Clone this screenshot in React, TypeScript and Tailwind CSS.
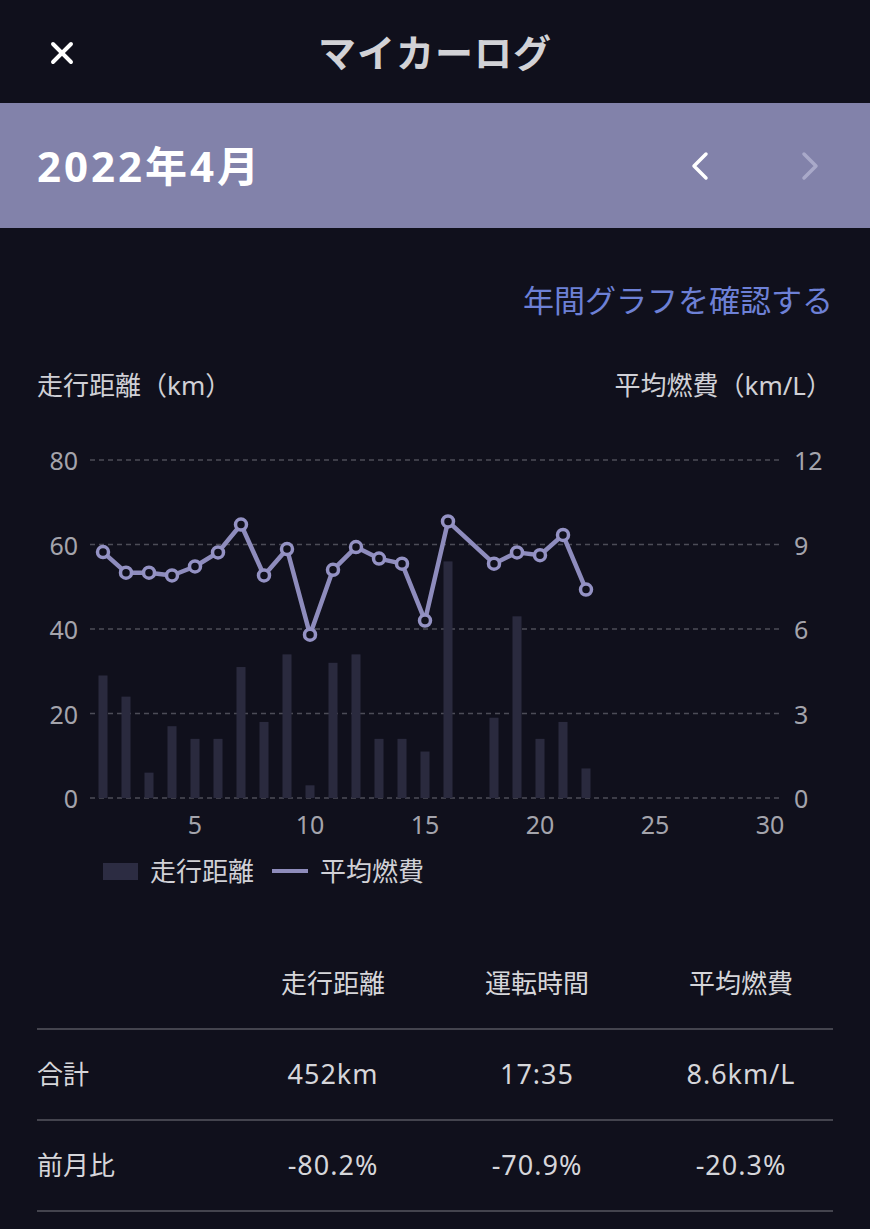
import { X } from "lucide-react";

const FONT = '"Noto Sans", "Noto Sans CJK JP", sans-serif';

// daily distance (km) and average fuel economy (km/L); null = no data that day
const distance = [29, 24, 6, 17, 14, 14, 31, 18, 34, 3, 32, 34, 14, 14, 11, 56, 0, 19, 43, 14, 18, 7];
const fuel: (number | null)[] = [
  8.73, 8.0, 8.0, 7.9, 8.22, 8.72, 9.71, 7.9, 8.84, 5.8, 8.1, 8.91, 8.5, 8.32, 6.3, 9.82, null, 8.32, 8.72, 8.62,
  9.34, 7.4,
];

const PLOT_TOP = 57;
const PLOT_BOTTOM = 395;
const PLOT_LEFT = 90;
const PLOT_RIGHT = 783;
const H = PLOT_BOTTOM - PLOT_TOP;

const xOf = (day: number) => 103 + (day - 1) * 23;
const yKm = (km: number) => PLOT_BOTTOM - (km / 80) * H;
const yFuel = (v: number) => PLOT_BOTTOM - (v / 12) * H;

function Chart() {
  const ticks = [0, 1, 2, 3, 4];
  const points = fuel
    .map((v, i) => (v == null ? null : { x: xOf(i + 1), y: yFuel(v) }))
    .filter((p): p is { x: number; y: number } => p !== null);

  return (
    <svg width={870} height={450} viewBox="0 0 870 450" className="block" fontFamily={FONT}>
      {ticks.map((t) => {
        const y = PLOT_BOTTOM - (t / 4) * H;
        return (
          <g key={t}>
            <line
              x1={PLOT_LEFT}
              x2={PLOT_RIGHT}
              y1={y}
              y2={y}
              stroke="#4c4c57"
              strokeWidth={1.5}
              strokeDasharray="5 4"
            />
            <text x={78} y={y} textAnchor="end" dominantBaseline="central" fontSize={25} fill="#a4a4ac">
              {t * 20}
            </text>
            <text x={794} y={y} textAnchor="start" dominantBaseline="central" fontSize={25} fill="#a4a4ac">
              {t * 3}
            </text>
          </g>
        );
      })}

      {distance.map((km, i) =>
        km > 0 ? (
          <rect key={i} x={xOf(i + 1) - 4.5} y={yKm(km)} width={9} height={PLOT_BOTTOM - yKm(km)} fill="#2a2a3e" />
        ) : null
      )}

      <polyline
        points={points.map((p) => `${p.x},${p.y}`).join(" ")}
        fill="none"
        stroke="#8e8cbd"
        strokeWidth={4.5}
        strokeLinejoin="round"
      />
      {points.map((p, i) => (
        <circle key={i} cx={p.x} cy={p.y} r={5.5} fill="#10101c" stroke="#9492c4" strokeWidth={3.5} />
      ))}

      {[5, 10, 15, 20, 25, 30].map((d) => (
        <text key={d} x={xOf(d)} y={421} textAnchor="middle" dominantBaseline="central" fontSize={25} fill="#a4a4ac">
          {d}
        </text>
      ))}
    </svg>
  );
}

const rows = [
  { label: "合計", values: ["452km", "17:35", "8.6km/L"] },
  { label: "前月比", values: ["-80.2%", "-70.9%", "-20.3%"] },
];

function StatsTable() {
  const grid = "grid grid-cols-[194px_204px_204px_194px] items-center";
  return (
    <div className="mx-[37px] text-[26px] text-[#d6d6da]">
      <div className={`${grid} h-[92px] border-b-2 border-[#44444e]`}>
        <div />
        <div className="text-center">走行距離</div>
        <div className="text-center">運転時間</div>
        <div className="text-center pl-[10px]">平均燃費</div>
      </div>
      {rows.map((r) => (
        <div key={r.label} className={`${grid} h-[91px] border-b-2 border-[#44444e]`}>
          <div>{r.label}</div>
          <div className="text-center text-[27px] tracking-[1px]">{r.values[0]}</div>
          <div className="text-center text-[27px] tracking-[1px]">{r.values[1]}</div>
          <div className="text-center pl-[10px] text-[27px] tracking-[1px]">{r.values[2]}</div>
        </div>
      ))}
    </div>
  );
}

export default function App() {
  return (
    <div className="w-[870px] h-[1229px] overflow-hidden bg-[#10101c]" style={{ fontFamily: FONT }}>
      {/* Header */}
      <div className="relative h-[103px] flex items-center justify-center">
        <button className="absolute left-[44px] top-[35px] p-0 text-white">
          <X className="w-[36px] h-[36px]" strokeWidth={2.6} />
        </button>
        <h1 className="text-[38px] font-bold text-[#d2d2d6] tracking-[1px] mt-[2px]">マイカーログ</h1>
      </div>

      {/* Month selector */}
      <div className="h-[125px] bg-[#8282aa] flex items-center justify-between pl-[37px] pr-[50px]">
        <div className="text-[42px] font-bold text-white leading-none tracking-[3px]">2022年4月</div>
        <div className="flex items-center gap-[90px]">
          <svg width="20" height="30" viewBox="0 0 20 30">
            <path d="M16 3 L4 15 L16 27" fill="none" stroke="#ffffff" strokeWidth={3.5} strokeLinecap="round" strokeLinejoin="round" />
          </svg>
          <svg width="20" height="30" viewBox="0 0 20 30">
            <path d="M4 3 L16 15 L4 27" fill="none" stroke="#a9a9c9" strokeWidth={3.5} strokeLinecap="round" strokeLinejoin="round" />
          </svg>
        </div>
      </div>

      {/* Annual graph link */}
      <div className="flex justify-end pr-[37px] pt-[52px]">
        <a className="text-[31px] leading-[40px] text-[#6d80d6]">年間グラフを確認する</a>
      </div>

      {/* Axis titles */}
      <div className="flex justify-between pl-[37px] pr-[38px] mt-[47px] text-[26px] leading-[36px] text-[#d0d0d6]">
        <span>走行距離（km）</span>
        <span>平均燃費（km/L）</span>
      </div>

      <Chart />

      {/* Legend */}
      <div className="flex items-center h-[36px] pl-[103px] text-[26px] text-[#d0d0d6]">
        <span className="w-[35px] h-[17px] bg-[#2c2c42]" />
        <span className="ml-[12px]">走行距離</span>
        <span className="ml-[18px] w-[36px] h-[4px] bg-[#8e8cbb]" />
        <span className="ml-[12px]">平均燃費</span>
      </div>

      <div className="h-[49px]" />
      <StatsTable />
    </div>
  );
}
